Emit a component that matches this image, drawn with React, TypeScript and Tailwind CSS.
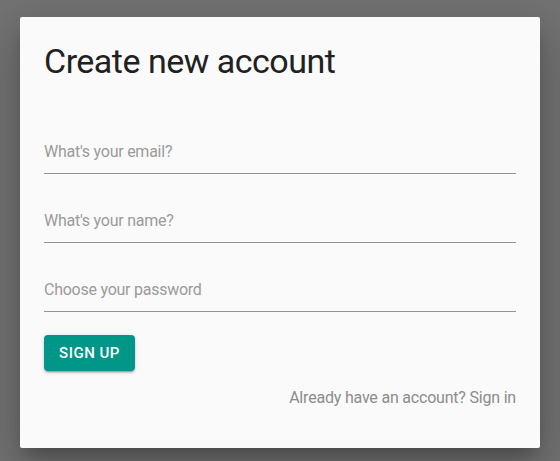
import React from 'react';

const fields = [
  { id: 'email', type: 'email', placeholder: "What's your email?" },
  { id: 'name', type: 'text', placeholder: "What's your name?" },
  { id: 'password', type: 'password', placeholder: 'Choose your password' },
];

export default function App() {
  return (
    <div
      className="w-[560px] h-[461px] bg-[#737373] pt-[17px] px-[20px] overflow-hidden"
      style={{ fontFamily: 'Roboto, "Noto Sans", sans-serif' }}
    >
      <div className="w-[520px] h-[431px] bg-[#fafafa] rounded-[2px] p-6 shadow-[0_11px_15px_-7px_rgba(0,0,0,0.2),0_24px_38px_3px_rgba(0,0,0,0.14),0_9px_46px_8px_rgba(0,0,0,0.12)]">
        <h1 className="text-[34px] leading-[40px] tracking-[-0.5px] text-[#212121] font-normal">Create new account</h1>

        <form className="mt-[61px] flex flex-col gap-[37px]" onSubmit={(e) => e.preventDefault()}>
          {fields.map((f) => (
            <div key={f.id} className="border-b border-[#949494] pb-[12px]">
              <input
                id={f.id}
                type={f.type}
                placeholder={f.placeholder}
                className="block w-full h-[19px] leading-[19px] text-base tracking-[-0.25px] bg-transparent outline-none text-[#212121] placeholder:text-[#9a9a9a]"
              />
            </div>
          ))}
        </form>

        <button
          type="button"
          className="mt-[23px] h-9 w-[91px] rounded bg-[#009688] text-white text-[15px] font-medium uppercase tracking-[0.5px] shadow-[0_3px_1px_-2px_rgba(0,0,0,0.2),0_2px_2px_0_rgba(0,0,0,0.14),0_1px_5px_0_rgba(0,0,0,0.12)]"
        >
          Sign up
        </button>

        <div className="mt-[17px] flex justify-end">
          <a href="#" className="text-base leading-[19px] tracking-[-0.2px] text-[#8c8c8c]">
            Already have an account? Sign in
          </a>
        </div>
      </div>
    </div>
  );
}
